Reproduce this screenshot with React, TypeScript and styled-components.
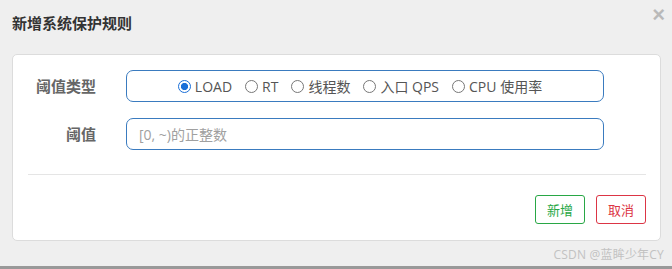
import React, { useState } from "react";
import styled, { createGlobalStyle } from "styled-components";

const Global = createGlobalStyle`
  html, body { margin: 0; padding: 0; }
  body {
    background: #efefef;
    font-family: "Open Sans", "Noto Sans CJK SC", sans-serif;
  }
  * { box-sizing: border-box; }
`;

const Page = styled.div`
  width: 672px;
  height: 269px;
  display: flex;
  flex-direction: column;
  background: #efefef;
  overflow: hidden;
`;

const Dialog = styled.div`
  flex: 1;
  display: flex;
  flex-direction: column;
`;

const Header = styled.div`
  height: 54px;
  display: flex;
  justify-content: space-between;
  align-items: flex-start;
  padding: 12px 7px 0 12px;
`;

const Title = styled.h4`
  margin: 0;
  font-family: "Noto Sans CJK SC", sans-serif;
  font-size: 15px;
  line-height: 21px;
  font-weight: 700;
  color: #333;
`;

const Close = styled.button`
  margin-top: -8px;
  padding: 0;
  border: 0;
  background: transparent;
  font-family: "Liberation Sans", sans-serif;
  font-size: 22px;
  font-weight: 700;
  line-height: 1;
  color: #000;
  opacity: 0.22;
  cursor: pointer;
`;

const Card = styled.div`
  margin: 0 11px 0 12px;
  height: 187px;
  background: #fff;
  border: 1px solid #dcdcdc;
  border-radius: 5px;
  padding-top: 15px;
  display: flex;
  flex-direction: column;
`;

const Form = styled.div`
  display: flex;
  flex-direction: column;
  gap: 16px;
`;

const Row = styled.div`
  display: grid;
  grid-template-columns: 83px 478px;
  column-gap: 30px;
  align-items: center;
`;

const Label = styled.label`
  text-align: right;
  font-family: "Noto Sans CJK SC", sans-serif;
  font-size: 15px;
  font-weight: 700;
  color: #666;
  line-height: 20px;
`;

const Box = styled.div`
  height: 32px;
  border: 1px solid #3a7bbf;
  border-radius: 7px;
  display: flex;
  align-items: center;
`;

const RadioGroup = styled(Box)`
  justify-content: center;
  gap: 13px;
  padding-right: 10px;
`;

const Option = styled.label`
  display: inline-flex;
  align-items: center;
  gap: 4px;
  font-size: 14px;
  color: #555;
  cursor: pointer;
  white-space: nowrap;
`;

const Radio = styled.input.attrs({ type: "radio" })`
  appearance: none;
  margin: 0;
  width: 13px;
  height: 13px;
  border-radius: 50%;
  border: 1px solid #777;
  background: #fff;
  &:checked {
    border: 1.5px solid #1a6fd8;
    background: radial-gradient(circle, #1a6fd8 0 3.4px, #fff 3.8px);
  }
`;

const Input = styled.input`
  height: 32px;
  width: 100%;
  border: 1px solid #3a7bbf;
  border-radius: 7px;
  padding: 0 12px;
  font-family: "Open Sans", "Noto Sans CJK SC", sans-serif;
  font-size: 14px;
  color: #333;
  outline: none;
  &::placeholder { color: #a0a0a0; }
`;

const Divider = styled.hr`
  margin: 24px 14px 0 15px;
  border: 0;
  border-top: 1px solid #e5e5e5;
`;

const Footer = styled.div`
  display: flex;
  justify-content: flex-end;
  gap: 11px;
  padding: 20px 14px 0;
`;

const Button = styled.button<{ $tone: string }>`
  width: 50px;
  height: 29px;
  padding: 0;
  background: #fff;
  border: 1px solid ${(p) => p.$tone};
  color: ${(p) => p.$tone};
  border-radius: 3px;
  font-family: "Noto Sans CJK SC", sans-serif;
  font-size: 13px;
  cursor: pointer;
`;

const Watermark = styled.div`
  flex: 1;
  display: flex;
  justify-content: flex-end;
  align-items: center;
  padding: 1px 8px 0 0;
  font-family: "Open Sans", "Noto Sans CJK SC", sans-serif;
  font-size: 12px;
  letter-spacing: 0.2px;
  color: #c2c2c2;
`;

const BottomBar = styled.div`
  height: 3px;
  background: #999;
`;

const options = ["LOAD", "RT", "线程数", "入口 QPS", "CPU 使用率"];

export default function App() {
  const [mode, setMode] = useState("LOAD");
  return (
    <Page>
      <Global />
      <Dialog>
        <Header>
          <Title>新增系统保护规则</Title>
          <Close aria-label="close">×</Close>
        </Header>
        <Card>
          <Form>
            <Row>
              <Label>阈值类型</Label>
              <RadioGroup>
                {options.map((o) => (
                  <Option key={o}>
                    <Radio name="mode" checked={mode === o} onChange={() => setMode(o)} />
                    {o}
                  </Option>
                ))}
              </RadioGroup>
            </Row>
            <Row>
              <Label>阈值</Label>
              <Input placeholder="[0, ~)的正整数" />
            </Row>
          </Form>
          <Divider />
          <Footer>
            <Button $tone="#28a745">新增</Button>
            <Button $tone="#dc3545">取消</Button>
          </Footer>
        </Card>
        <Watermark>CSDN @蓝眸少年CY</Watermark>
      </Dialog>
      <BottomBar />
    </Page>
  );
}
